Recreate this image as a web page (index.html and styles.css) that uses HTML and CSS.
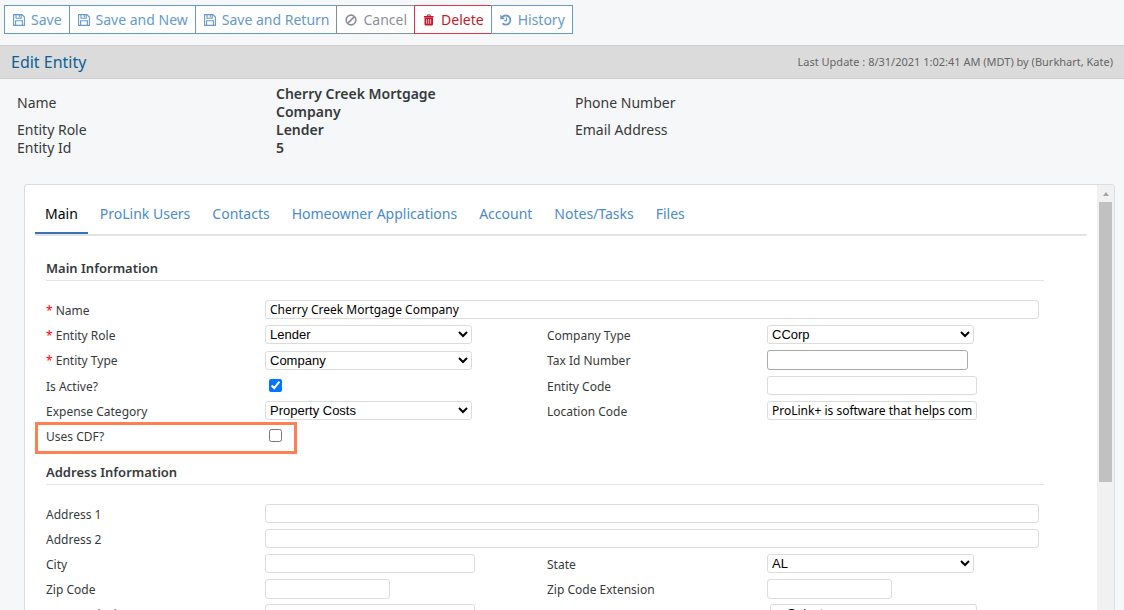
FILE: index.html
```html
<!DOCTYPE html>
<html lang="en">
<head>
<meta charset="utf-8">
<title>Edit Entity</title>
<link rel="stylesheet" href="styles.css">
</head>
<body>
<svg class="defs" aria-hidden="true">
  <symbol id="i-save" viewBox="0 0 12 12">
    <path d="M.6.6h8.3l2.5 2.5v8.3H.6z M3 .8v3.4h5.2V.8 M6.3 1v2.2 M2.6 11.2V6.7h6.8v4.5" fill="none" stroke="currentColor" stroke-width="1.1"/>
  </symbol>
  <symbol id="i-ban" viewBox="0 0 12 12">
    <circle cx="6" cy="6" r="4.8" fill="none" stroke="currentColor" stroke-width="1.7"/>
    <path d="M2.8 9.2l6.4-6.4" stroke="currentColor" stroke-width="1.7"/>
  </symbol>
  <symbol id="i-trash" viewBox="0 0 12 12">
    <path fill="currentColor" fill-rule="evenodd" d="M1 2h2.500L4.300.6h2.800L8 2h2.500v1.400H1zM4.500 2h2.500l-.4-.6H4.900zM1.500 3.700h8.500v6.500q0 1.200-1.200 1.200H2.700Q1.500 11.400 1.500 10.200zM3.400 5v4.800h.7V5zM5.400 5v4.800h.7V5zM7.400 5v4.800h.7V5z"/>
  </symbol>
  <symbol id="i-history" viewBox="0 0 12 12">
    <path d="M2.300 3.100A4.600 4.600 0 1 1 2.500 9.300" fill="none" stroke="currentColor" stroke-width="1.800"/>
    <path d="M.3.6v4.600h4.600z" fill="currentColor"/>
    <path d="M6.500 3.600v3H4.300" fill="none" stroke="currentColor" stroke-width="1.100"/>
  </symbol>
</svg>

<div class="toolbar" role="toolbar">
  <button type="button" class="btn"><svg><use href="#i-save"/></svg>Save</button>
  <button type="button" class="btn"><svg><use href="#i-save"/></svg>Save and New</button>
  <button type="button" class="btn"><svg><use href="#i-save"/></svg>Save and Return</button>
  <button type="button" class="btn btn-muted"><svg><use href="#i-ban"/></svg>Cancel</button>
  <button type="button" class="btn btn-danger"><svg><use href="#i-trash"/></svg>Delete</button>
  <button type="button" class="btn"><svg><use href="#i-history"/></svg>History</button>
</div>

<header class="titlebar">
  <h1>Edit Entity</h1>
  <span class="updated">Last Update : 8/31/2021 1:02:41 AM (MDT) by (Burkhart, Kate)</span>
</header>

<div class="summary">
  <span>Name</span><strong>Cherry Creek Mortgage Company</strong><span>Phone Number</span>
  <span>Entity Role</span><strong>Lender</strong><span>Email Address</span>
  <span>Entity Id</span><strong>5</strong>
</div>

<main class="panel">
  <div class="content">
    <nav class="tabs">
      <a href="#" class="active">Main</a>
      <a href="#">ProLink Users</a>
      <a href="#">Contacts</a>
      <a href="#">Homeowner Applications</a>
      <a href="#">Account</a>
      <a href="#">Notes/Tasks</a>
      <a href="#">Files</a>
    </nav>

    <form class="form">
      <h2>Main Information</h2>
      <div class="grid grid-main">
        <label for="name"><i>*</i> Name</label>
        <div class="wide"><input id="name" type="text" class="full" value="Cherry Creek Mortgage Company"></div>

        <label for="role"><i>*</i> Entity Role</label>
        <div><select id="role"><option>Lender</option></select></div>
        <label for="ctype">Company Type</label>
        <div><select id="ctype"><option>CCorp</option></select></div>

        <label for="etype"><i>*</i> Entity Type</label>
        <div><select id="etype"><option>Company</option></select></div>
        <label for="tax">Tax Id Number</label>
        <div><input id="tax" type="text" class="tax"></div>

        <label for="active">Is Active?</label>
        <div><input id="active" type="checkbox" checked></div>
        <label for="code">Entity Code</label>
        <div><input id="code" type="text"></div>

        <label for="expense">Expense Category</label>
        <div><select id="expense"><option>Property Costs</option></select></div>
        <label for="location">Location Code</label>
        <div><input id="location" type="text" value="ProLink+ is software that helps companies"></div>

        <label for="cdf" class="marked">Uses CDF?</label>
        <div><input id="cdf" type="checkbox"></div>
      </div>

      <h2>Address Information</h2>
      <div class="grid">
        <label for="a1">Address 1</label>
        <div class="wide"><input id="a1" type="text" class="full"></div>
        <label for="a2">Address 2</label>
        <div class="wide"><input id="a2" type="text" class="full"></div>
        <label for="city">City</label>
        <div><input id="city" type="text"></div>
        <label for="state">State</label>
        <div><select id="state"><option>AL</option></select></div>
        <label for="zip">Zip Code</label>
        <div><input id="zip" type="text" class="short"></div>
        <label for="zipx">Zip Code Extension</label>
        <div><input id="zipx" type="text" class="short"></div>
        <label for="block">Census Block</label>
        <div><input id="block" type="text"></div>
        <div class="inset"><select aria-label="Area"><option>-- Select --</option></select></div>
      </div>
    </form>
  </div>
  <div class="scrollbar" aria-hidden="true"><span class="up"></span><span class="thumb"></span></div>
</main>
</body>
</html>
```
FILE: styles.css
```css
*, *::before { box-sizing: border-box; }
body {
  margin: 0;
  height: 100vh;
  display: flex;
  flex-direction: column;
  overflow: hidden;
  background: #f6f7f9;
  color: #373a3c;
  font: 14px/18px "Noto Sans", sans-serif;
}
.defs { display: none; }

.toolbar { display: flex; padding: 5px 4px 11px; }
.btn {
  display: flex;
  align-items: center;
  gap: 6px;
  height: 29px;
  padding: 0 7px 0 8px;
  margin-right: -1px;
  border: 1px solid #6699cc;
  background: #fff;
  color: #6699cc;
  font: 14px/18px "Noto Sans", sans-serif;
  white-space: nowrap;
}
.btn svg { width: 12px; height: 12px; }
.btn-muted { border-color: #868e96; color: #8c8f9a; }
.btn-danger { border-color: #dc3545; color: #c4182c; }

.titlebar {
  display: flex;
  align-items: center;
  justify-content: space-between;
  height: 34px;
  padding: 0 11px;
  background: #dbdbdb;
  border-top: 1px solid #d0d0d0;
  border-bottom: 1px solid #d0d0d0;
}
h1 { margin: 0; font-size: 16px; line-height: 20px; font-weight: 400; color: #0b6299; }
.updated { font-size: 11px; color: #666; }

.summary {
  display: grid;
  grid-template-columns: 259fr 299fr 532fr;
  align-items: center;
  padding: 6px 17px 0;
}
.summary strong { font-weight: 600; width: 180px; }

.panel {
  flex: 1;
  min-height: 0;
  display: flex;
  margin: 27px 9px 0 24px;
  border: 1px solid #dadcde;
  border-bottom: 0;
  border-radius: 4px 4px 0 0;
  background: #fff;
  overflow: hidden;
}
.content { flex: 1; overflow: hidden; padding: 9px 10px 0; }
.tabs { display: flex; gap: 2px; border-bottom: 2px solid #e4e4e4; }
.tabs a {
  padding: 11px 10px 9px;
  border-bottom: 2px solid transparent;
  color: #4a8bce;
  text-decoration: none;
}
.tabs .active { color: #000; border-color: #3a72b4; }

.form { padding: 23px 43px 0 11px; }
h2 {
  margin: 0 0 16px;
  padding-bottom: 3px;
  border-bottom: 1px solid #e4e4e4;
  font-size: 13px;
  line-height: 18px;
  font-weight: 600;
}
.grid {
  display: grid;
  grid-template-columns: 219fr 282fr 220fr 277fr;
  grid-auto-rows: 25px;
  align-items: center;
  margin-bottom: 15px;
  font-size: 12px;
}
.grid-main { grid-template-rows: 25px 25px 26px; }
.grid label { padding-top: 2px; white-space: nowrap; }
.grid label i { color: #f00; font-style: normal; }
.grid > div { display: flex; align-items: center; min-width: 0; }
.grid .wide { grid-column: span 3; padding-right: 5px; }
.grid .inset { grid-column: 4; padding-left: 3px; }

input[type="text"], select {
  width: 210px;
  height: 19px;
  margin: 0;
  padding: 0 4px;
  border: 1px solid #dcdcdc;
  border-radius: 3px;
  background: #fff;
  color: #000;
  font: 12px/17px "Noto Sans", sans-serif;
}
select { width: 207px; padding: 0; font: 13px/17px "Liberation Sans", sans-serif; }
input.full { width: 100%; }
input.tax { width: 201px; height: 20px; border-color: #aaa; }
input.short { width: 125px; height: 20px; }
input[type="checkbox"] { width: 13px; height: 13px; margin: 0 4px; }

.marked { position: relative; }
.marked::before {
  content: "";
  position: absolute;
  left: -11px;
  top: -4px;
  width: 262px;
  height: 32px;
  border: 3px solid #ff7f50;
  pointer-events: none;
}

.scrollbar {
  width: 17px;
  padding: 0 2px;
  display: flex;
  flex-direction: column;
  align-items: center;
  background: #f1f1f1;
}
.up {
  margin: 7px 0 6px;
  border: 3px solid transparent;
  border-top: 0;
  border-bottom: 4px solid #a3a3a3;
}
.thumb { width: 100%; height: 280px; background: #c1c1c1; }
```
